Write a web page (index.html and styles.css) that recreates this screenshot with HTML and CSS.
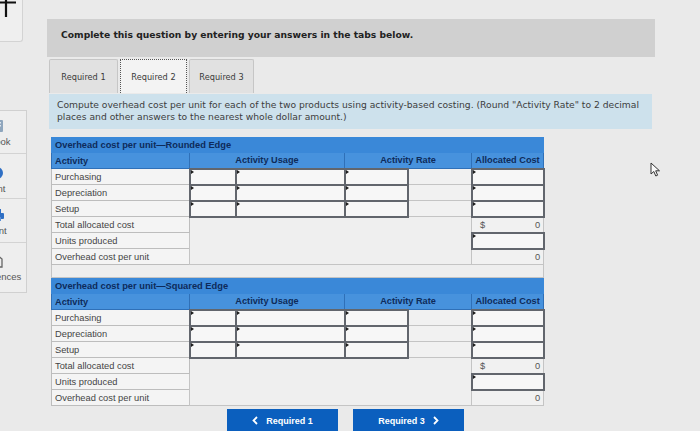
FILE: index.html
```html
<!DOCTYPE html>
<html>
<head>
<meta charset="utf-8">
<title>Overhead cost per unit</title>
<link rel="stylesheet" href="styles.css">
</head>
<body>
<div class="page">
  <aside class="side">
    <div class="topbox">
      <svg class="plus" width="20" height="20" viewBox="0 0 20 20"><path d="M6 0V17M0 2.5H16" stroke="#111" stroke-width="2.2" fill="none"/></svg>
    </div>
    <nav class="tools">
      <div class="tool t1">
        <svg width="16" height="14" viewBox="0 0 16 14"><rect x="2" y="1" width="12" height="12" rx="1" fill="#8fa6bd"/><rect x="4" y="3" width="8" height="1.5" fill="#dfe6ee"/><rect x="4" y="6" width="8" height="1.5" fill="#dfe6ee"/></svg>
        <span>eBook</span>
      </div>
      <div class="tool t2">
        <svg width="16" height="14" viewBox="0 0 16 14"><circle cx="8" cy="7" r="6" fill="#2f6fc4"/><circle cx="8" cy="7" r="2.5" fill="#e9eef5"/></svg>
        <span>Hint</span>
      </div>
      <div class="tool t3">
        <svg width="16" height="14" viewBox="0 0 16 14"><rect x="4" y="1" width="8" height="4" fill="#2f6fc4"/><rect x="1" y="5" width="14" height="6" rx="1" fill="#2f6fc4"/><rect x="4" y="9" width="8" height="4" fill="#5b8fd6"/></svg>
        <span>Print</span>
      </div>
      <div class="tool t4">
        <svg width="16" height="14" viewBox="0 0 16 14"><path d="M3 13V5L8 1L13 5V13Z" fill="none" stroke="#666" stroke-width="1.3"/></svg>
        <span>References</span>
      </div>
    </nav>
  </aside>

  <main class="main">
    <div class="banner">Complete this question by entering your answers in the tabs below.</div>

    <div class="tabs">
      <div class="tab w1">Required 1</div>
      <div class="tab w2 active">Required 2</div>
      <div class="tab w3">Required 3</div>
    </div>

    <div class="instr">Compute overhead cost per unit for each of the two products using activity-based costing. (Round "Activity Rate" to 2 decimal<br>places and other answers to the nearest whole dollar amount.)</div>

    <table class="oh">
      <colgroup><col class="c1"><col class="c2"><col class="c3"><col class="c4"><col class="c5"><col class="c6"></colgroup>
      <tr class="ttl"><th colspan="6">Overhead cost per unit—Rounded Edge</th></tr>
      <tr class="hd"><th class="left">Activity</th><th colspan="2">Activity Usage</th><th colspan="2">Activity Rate</th><th>Allocated Cost</th></tr>
      <tr><td class="lbl">Purchasing</td><td class="in"></td><td class="in"></td><td class="in"></td><td class="rt"></td><td class="in"></td></tr>
      <tr><td class="lbl">Depreciation</td><td class="in"></td><td class="in"></td><td class="in"></td><td class="rt"></td><td class="in"></td></tr>
      <tr><td class="lbl">Setup</td><td class="in"></td><td class="in"></td><td class="in"></td><td class="rt"></td><td class="in"></td></tr>
      <tr><td class="lbl">Total allocated cost</td><td class="blank" colspan="4" rowspan="3"></td><td class="val"><span class="cur">$</span><span>0</span></td></tr>
      <tr><td class="lbl">Units produced</td><td class="in"></td></tr>
      <tr><td class="lbl">Overhead cost per unit</td><td class="val"><span class="cur"></span><span>0</span></td></tr>
      <tr class="gap"><td colspan="6"></td></tr>
    </table>

    <table class="oh second">
      <colgroup><col class="c1"><col class="c2"><col class="c3"><col class="c4"><col class="c5"><col class="c6"></colgroup>
      <tr class="ttl"><th colspan="6">Overhead cost per unit—Squared Edge</th></tr>
      <tr class="hd"><th class="left">Activity</th><th colspan="2">Activity Usage</th><th colspan="2">Activity Rate</th><th>Allocated Cost</th></tr>
      <tr><td class="lbl">Purchasing</td><td class="in"></td><td class="in"></td><td class="in"></td><td class="rt"></td><td class="in"></td></tr>
      <tr><td class="lbl">Depreciation</td><td class="in"></td><td class="in"></td><td class="in"></td><td class="rt"></td><td class="in"></td></tr>
      <tr><td class="lbl">Setup</td><td class="in"></td><td class="in"></td><td class="in"></td><td class="rt"></td><td class="in"></td></tr>
      <tr><td class="lbl">Total allocated cost</td><td class="blank" colspan="4" rowspan="3"></td><td class="val"><span class="cur">$</span><span>0</span></td></tr>
      <tr><td class="lbl">Units produced</td><td class="in"></td></tr>
      <tr><td class="lbl">Overhead cost per unit</td><td class="val"><span class="cur"></span><span>0</span></td></tr>
    </table>

    <div class="navbtns">
      <button class="btn"><svg width="6" height="9" viewBox="0 0 6 9"><path d="M5 1L1.5 4.5L5 8" stroke="#fff" stroke-width="1.8" fill="none"/></svg><span>Required 1</span></button>
      <button class="btn"><span>Required 3</span><svg width="6" height="9" viewBox="0 0 6 9"><path d="M1 1L4.5 4.5L1 8" stroke="#fff" stroke-width="1.8" fill="none"/></svg></button>
    </div>
  </main>
</div>

<svg class="cursor" width="11" height="15" viewBox="0 0 11 15"><path d="M1 1V12L3.8 9.5L5.8 14L7.6 13.2L5.7 8.8H9.5Z" fill="#fafafa" stroke="#333" stroke-width="1"/></svg>
</body>
</html>
```

FILE: styles.css
```css
* { box-sizing: border-box; }
html, body { margin: 0; height: 100%; }
body {
  background: #eaeaea;
  overflow: hidden;
  font-family: "DejaVu Sans", Verdana, sans-serif;
  color: #333;
}
.page { display: flex; }

/* sidebar (cut off on the left) */
.side { width: 47px; flex: none; }
.topbox {
  width: 23px; height: 42px;
  background: #efefef;
  border-right: 1px solid #d3d3d3;
  border-bottom: 1px solid #d3d3d3;
  border-bottom-right-radius: 3px;
  overflow: hidden;
}
.plus { display: block; }
.tools {
  margin-top: 68px;
  width: 27px; height: 183px;
  background: #eeeeee;
  border: 1px solid #d0d0d0;
  border-left: none;
  overflow: hidden;
  display: flex; flex-direction: column;
}
.tool {
  width: 62px; margin-left: -34px; flex: none;
  display: flex; flex-direction: column; align-items: center; gap: 3px;
  border-bottom: 1px solid #d3d3d3;
  font-family: "Liberation Sans", Arial, sans-serif;
  font-size: 9.5px; color: #555;
}
.tool svg { display: block; }
.t1 { height: 43px; padding-top: 8px; }
.t2 { height: 45px; padding-top: 12px; }
.t3 { height: 44px; padding-top: 9px; }
.t4 { height: 50px; padding-top: 11px; border-bottom: none; }

/* main */
.main { width: 608px; flex: none; padding-top: 19px; }
.banner {
  height: 38px;
  background: #d0d0d0;
  padding: 10px 0 0 14px;
  font-size: 9.2px; font-weight: bold; line-height: 11px;
  color: #222;
}
.tabs { display: flex; gap: 2px; margin: 2px 0 0 2px; }
.tab {
  height: 34px;
  display: flex; align-items: center; justify-content: center;
  background: #e1e1e1;
  border: 1px solid #c6c6c6;
  border-bottom: none;
  border-radius: 2px 2px 0 0;
  font-size: 8.2px; color: #3a3a3a;
}
.tab.active { background: #f3f3f3; border: 1px dotted #555; border-bottom: none; border-radius: 0; }
.w1 { width: 69px; }
.w2 { width: 67px; }
.w3 { width: 65px; }

.instr {
  margin: 1px 0 0 2px;
  width: 603px; height: 35px;
  background: #cde1ec;
  padding: 5px 8px 0;
  font-size: 9.2px; line-height: 12px;
  color: #3d3d3d;
  white-space: nowrap;
}

/* tables */
.oh {
  margin: 8px 0 0 4px;
  width: 492px;
  table-layout: fixed;
  border-collapse: collapse;
  font-family: "Liberation Sans", Arial, sans-serif;
  border: 1px solid #b5b5b5;
}
.oh.second { margin-top: 0; }
.c1 { width: 138px; }
.c2 { width: 46px; }
.c3 { width: 109px; }
.c4 { width: 63px; }
.c5 { width: 64px; }
.c6 { width: 72px; }
.oh th, .oh td { padding: 0; }
.oh tr { height: 16px; }
.oh tr.ttl { height: 15px; }
.ttl th {
  background: #3a88d8;
  color: #0e2b5a;
  font-size: 9.3px; font-weight: bold;
  text-align: left; padding-left: 3px;
  border: 1px solid #3a88d8;
}
.hd th {
  background: #4792dd;
  color: #0e2b5a;
  font-size: 9.2px; font-weight: bold;
  text-align: center;
  border: 1px solid #2f70b8;
  border-top-color: #4792dd;
}
.hd th.left { text-align: left; padding-left: 3px; }
.lbl {
  background: #f4f4f4;
  border: 1px solid #bdbdbd;
  font-size: 9.3px; color: #444;
  padding-left: 3px !important;
  white-space: nowrap;
}
.in {
  position: relative;
  background: #f7f7f7;
  border: 2px solid #62666d;
}
.in::before {
  content: "";
  position: absolute; top: 0; left: 0;
  border-top: 2px solid transparent;
  border-bottom: 2px solid transparent;
  border-left: 3px solid #1c1c1c;
}
.rt { background: #f1f1f1; border: 1px solid #c4c4c4; }
.blank { background: #efefef; border: 1px solid #c4c4c4; }
.val {
  background: #f1f1f1;
  border: 1px solid #c4c4c4;
  font-size: 9.3px; color: #555;
}
.val { padding: 0 3px 0 8px !important; }
.val span:last-child { float: right; }
.gap td { background: #eeeeee; border: 1px solid #c4c4c4; }
.oh tr.gap { height: 13px; }

/* nav buttons */
.navbtns { display: flex; gap: 15px; margin: 3px 0 0 180px; }
.btn {
  width: 111px; height: 23px;
  border: none; border-radius: 0;
  background: #0b5fbe;
  color: #fff;
  font-family: "Liberation Sans", Arial, sans-serif;
  font-size: 9px; font-weight: bold;
  display: flex; align-items: center; justify-content: center; gap: 8px;
  padding: 0;
}
.btn svg { display: block; }

.cursor { position: absolute; left: 650px; top: 162px; }
```
